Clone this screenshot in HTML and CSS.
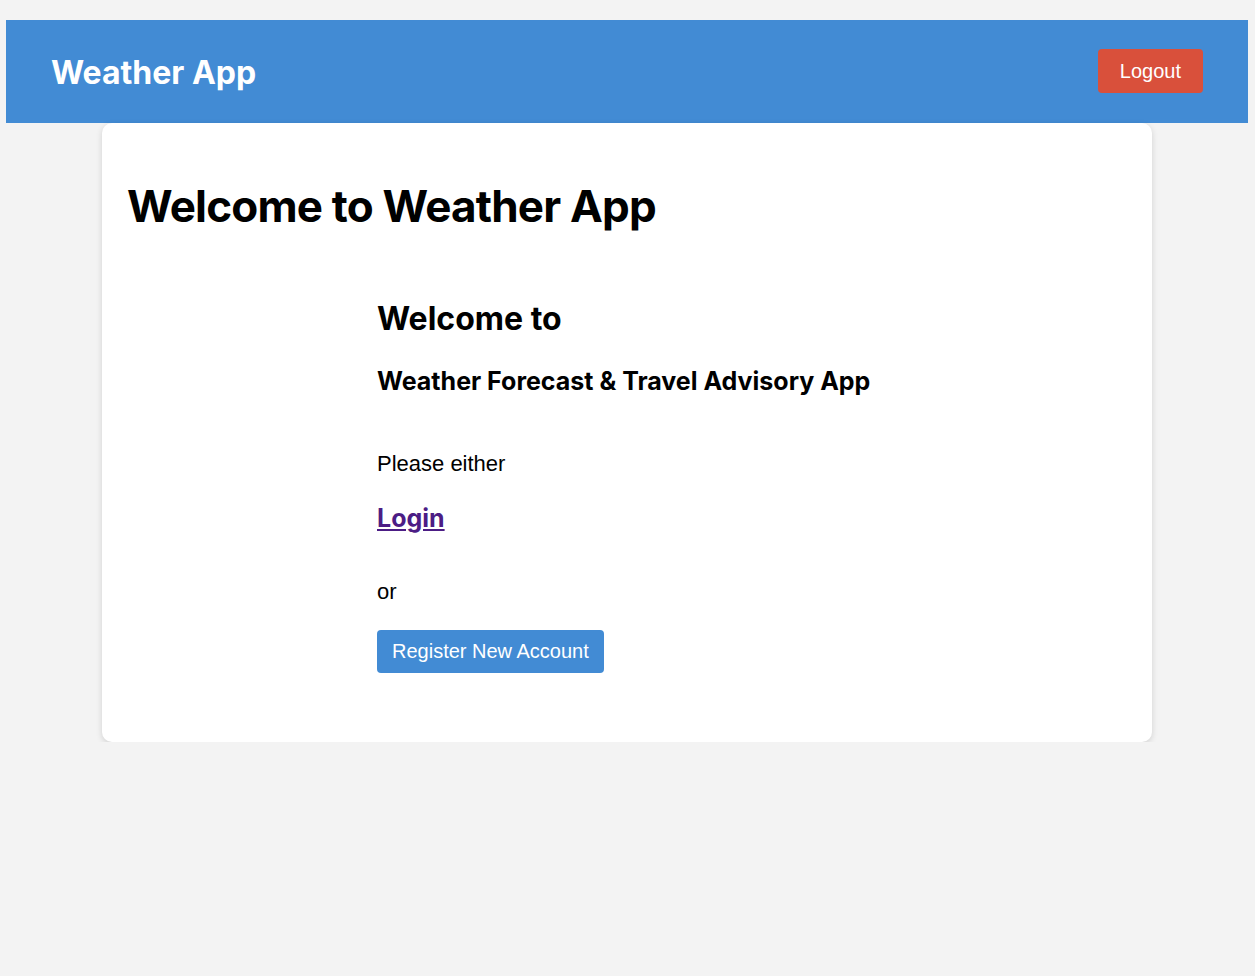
FILE: index.html
```html
<!DOCTYPE html>
<html>
<head>
<meta charset="utf-8">
<title>Weather App</title>
<link rel="stylesheet" href="styles.css">
</head>
<body>
<header class="topbar">
  <div class="brand">Weather App</div>
  <button class="btn btn-logout">Logout</button>
</header>
<main class="card">
  <h1 class="page-title">Welcome to Weather App</h1>
  <section class="intro">
    <h2 class="intro-title">Welcome to</h2>
    <h3 class="intro-sub">Weather Forecast &amp; Travel Advisory App</h3>
    <p class="text text-first">Please either</p>
    <h3 class="login-line"><a class="login-link" href="#">Login</a></h3>
    <p class="text text-or">or</p>
    <button class="btn btn-register">Register New Account</button>
  </section>
</main>
</body>
</html>
```
FILE: styles.css
```css
html, body {
  margin: 0;
  padding: 0;
}
body {
  background: #f3f3f3;
  padding: 20px 7px 0 6px;
  font-family: "Liberation Sans", Arial, sans-serif;
  color: #000;
}
.topbar {
  background: #428bd4;
  height: 103px;
  box-sizing: border-box;
  padding: 0 45px;
  display: flex;
  align-items: center;
  justify-content: space-between;
}
.brand {
  font-family: Inter, "Noto Sans", sans-serif;
  font-weight: 700;
  font-size: 32px;
  color: #fff;
  margin-top: 2px;
}
.btn {
  font-family: "Liberation Sans", Arial, sans-serif;
  font-size: 20px;
  color: #fff;
  border: none;
  border-radius: 4px;
  cursor: pointer;
  line-height: 23px;
}
.btn-logout {
  background: #d9503b;
  padding: 11px 22px 10px;
  margin-top: -2px;
}
.card {
  width: 1050px;
  box-sizing: border-box;
  margin-left: 96px;
  background: #fff;
  border-radius: 10px;
  box-shadow: 0 2px 6px rgba(0,0,0,0.14);
  padding: 25px 25px 69px;
}
.page-title {
  font-family: Inter, "Noto Sans", sans-serif;
  font-weight: 700;
  font-size: 44px;
  letter-spacing: -0.8px;
  margin: 32px 0 67px;
  line-height: 1.2;
}
.intro {
  width: 500px;
  margin: 0 auto;
}
.intro-title {
  font-family: Inter, "Noto Sans", sans-serif;
  font-weight: 700;
  font-size: 32px;
  margin: 0 0 28px;
  line-height: 1.2;
}
.intro-sub {
  font-family: Inter, "Noto Sans", sans-serif;
  font-weight: 700;
  font-size: 25px;
  margin: 0 0 55px;
  line-height: 1.2;
}
.text {
  font-size: 22px;
  margin: 0;
  line-height: 25px;
}
.login-line {
  font-family: Inter, "Noto Sans", sans-serif;
  font-weight: 700;
  font-size: 25px;
  margin: 27px 0 46px;
  line-height: 1.2;
}
.login-link {
  color: #4c1d85;
  text-decoration: underline;
}
.text-or {
  margin-bottom: 26px;
}
.btn-register {
  display: block;
  background: #428bd4;
  padding: 10px 15px;
}
```
